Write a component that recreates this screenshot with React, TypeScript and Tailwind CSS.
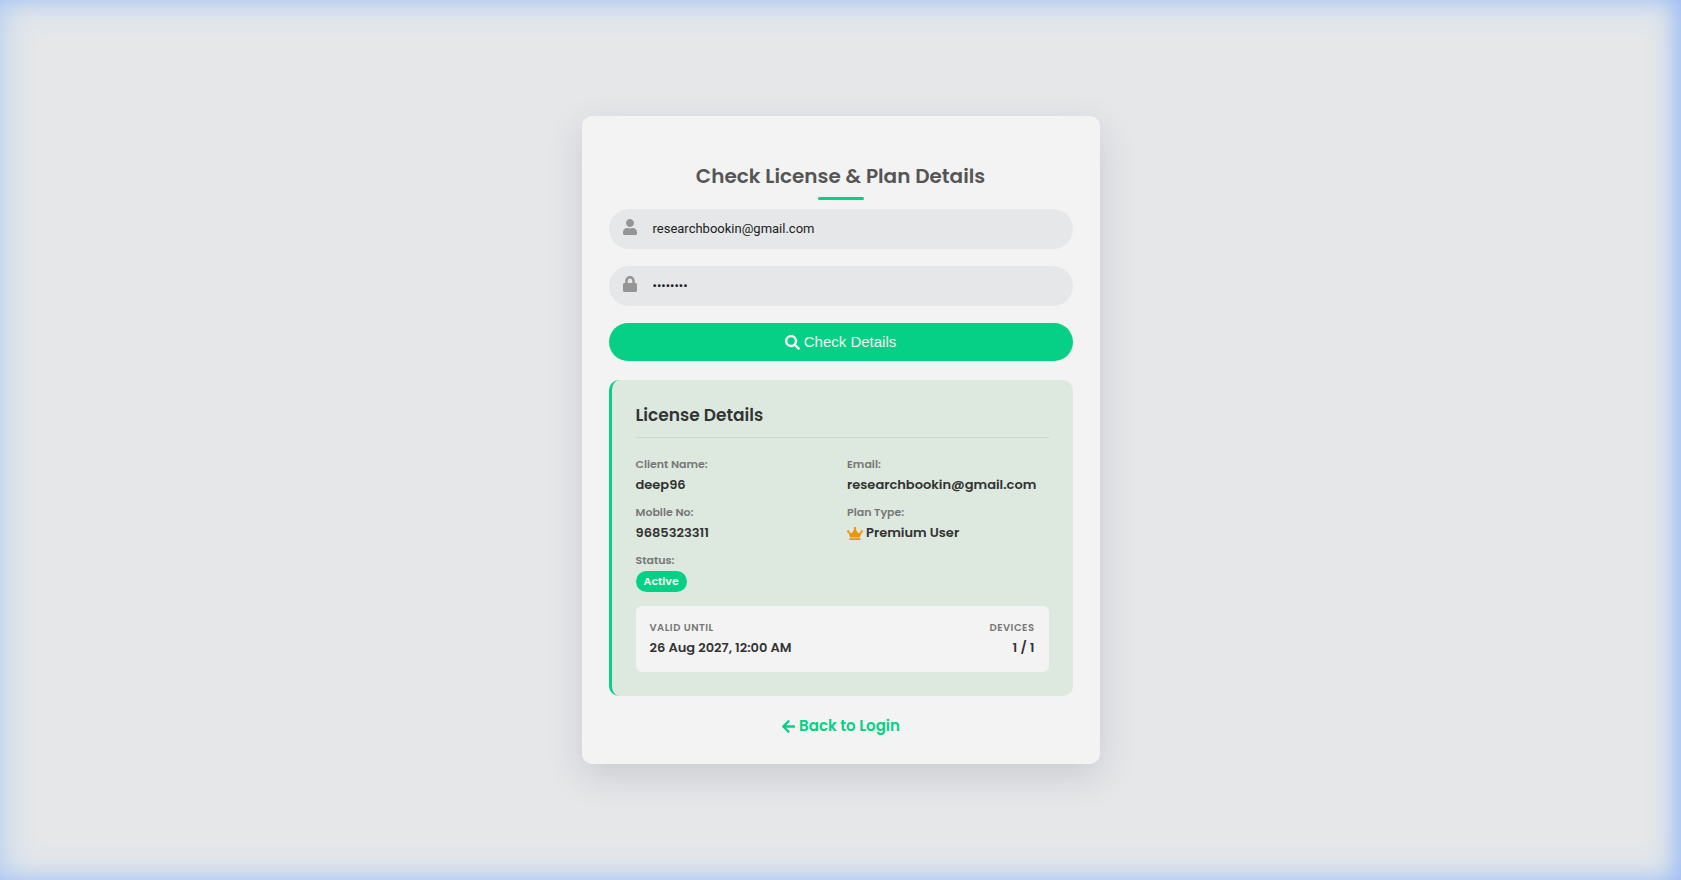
import type { ReactNode } from "react";
import { FaArrowLeft, FaCrown, FaLock, FaSearch, FaUser } from "react-icons/fa";

const license = {
  client: "deep96",
  email: "researchbookin@gmail.com",
  mobile: "9685323311",
  plan: "Premium User",
  status: "Active",
  validUntil: "26 Aug 2027, 12:00 AM",
  devices: "1 / 1",
};

function Detail({ label, children }: { label: string; children: ReactNode }) {
  return (
    <div>
      <dt className="text-[11px] leading-5 font-semibold text-[#777]">{label}</dt>
      <dd className="mt-px text-[13px] leading-5 font-semibold text-[#333]">{children}</dd>
    </div>
  );
}

function Field({
  id,
  label,
  type,
  value,
  icon,
}: {
  id: string;
  label: string;
  type: string;
  value: string;
  icon: ReactNode;
}) {
  return (
    <div className="flex h-10 items-center gap-[15px] rounded-full bg-[#e5e7e9] px-[13px]">
      <label htmlFor={id} aria-label={label} className="pb-1 text-[#959595]">
        {icon}
      </label>
      <input
        id={id}
        type={type}
        defaultValue={value}
        className="min-w-0 flex-1 bg-transparent font-['Roboto',sans-serif] text-[13px] text-[#222] outline-none"
      />
    </div>
  );
}

export default function App() {
  return (
    <main className="flex min-h-screen items-center justify-center bg-[#e5e7e9] font-[Poppins,Inter,sans-serif] shadow-[inset_-10px_0_20px_-4px_rgba(120,165,250,0.45),inset_0_0_34px_#afcdf3]">
      <div className="w-full max-w-[518px] rounded-[10px] bg-[#f3f3f3] px-[27px] pt-[42px] pb-[26px] shadow-[0_12px_36px_rgba(60,60,90,0.16)]">
        <h1 className="text-center text-[20px] leading-9 font-semibold text-[#555]">
          Check License &amp; Plan Details
        </h1>
        <div className="mx-auto mt-[3px] h-[3px] w-[46px] rounded-full bg-[#06d085]" />

        <form className="mt-[9px] flex flex-col gap-[17px]" onSubmit={(e) => e.preventDefault()}>
          <Field id="email" label="Email" type="email" value={license.email} icon={<FaUser size={16} />} />
          <Field id="password" label="Password" type="password" value="password" icon={<FaLock size={16} />} />
          <button
            type="submit"
            className="flex h-[38px] items-center justify-center gap-1 rounded-full bg-[#06d085] font-['Liberation_Sans',Arial,sans-serif] text-[15px] text-[#f3f3f3]"
          >
            <FaSearch size={15} />
            Check Details
          </button>
        </form>

        <section className="mt-[19px] rounded-[10px] border-l-[3px] border-[#06d085] bg-[#dde8de] p-6">
          <h2 className="border-b border-[#d1d3d1] pb-[11px] text-[17px] leading-[22px] font-semibold text-[#333]">
            License Details
          </h2>
          <dl className="mt-4 grid grid-cols-2 gap-x-[10px] gap-y-[7px]">
            <Detail label="Client Name:">{license.client}</Detail>
            <Detail label="Email:">{license.email}</Detail>
            <Detail label="Mobile No:">{license.mobile}</Detail>
            <Detail label="Plan Type:">
              <span className="flex items-center gap-[3px]">
                <FaCrown size={13} className="w-4 text-[#e8960f]" />
                {license.plan}
              </span>
            </Detail>
            <Detail label="Status:">
              <span className="inline-block rounded-full bg-[#06d085] px-2 text-[11px] leading-[21px] text-[#f3f3f3]">
                {license.status}
              </span>
            </Detail>
          </dl>
          <dl className="mt-[14px] flex justify-between rounded-md bg-[#f3f3f3] px-[14px] pt-3 pb-[14px]">
            <div>
              <dt className="text-[10px] leading-5 font-semibold tracking-[0.5px] text-[#777] uppercase">Valid until</dt>
              <dd className="text-[13px] leading-5 font-semibold text-[#333]">{license.validUntil}</dd>
            </div>
            <div className="text-right">
              <dt className="text-[10px] leading-5 font-semibold tracking-[0.5px] text-[#777] uppercase">Devices</dt>
              <dd className="text-[13px] leading-5 font-semibold text-[#333]">{license.devices}</dd>
            </div>
          </dl>
        </section>

        <a
          href="#login"
          className="mx-auto mt-[18px] flex w-fit items-center gap-[3px] text-[15px] leading-6 font-semibold text-[#06d085]"
        >
          <FaArrowLeft size={15} />
          Back to Login
        </a>
      </div>
    </main>
  );
}
